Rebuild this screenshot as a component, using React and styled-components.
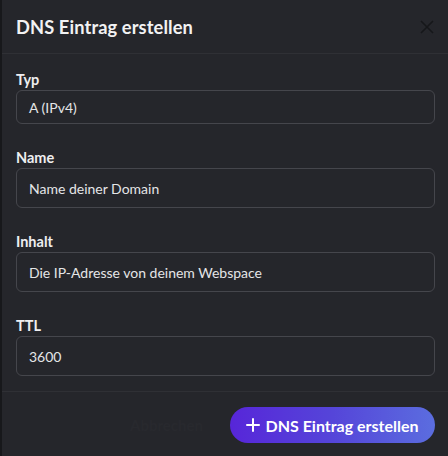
import React from "react";
import styled, { createGlobalStyle } from "styled-components";

const Global = createGlobalStyle`
  html, body { margin: 0; padding: 0; background: #141517; }
  body { font-family: Lato, "Noto Sans", sans-serif; }
  * { box-sizing: border-box; }
`;

const Screen = styled.div`
  display: flex;
  width: 448px;
  height: 456px;
  overflow: hidden;
`;

const Backdrop = styled.div`
  width: 2px;
  flex: none;
  background: #17181b;
`;

const Modal = styled.div`
  flex: 1;
  display: flex;
  flex-direction: column;
  background: #25262b;
  color: #c1c2c5;
`;

const Header = styled.div`
  height: 54px;
  display: flex;
  align-items: center;
  justify-content: space-between;
  padding: 0 13px 0 14px;
  border-bottom: 1px solid #2f3035;
`;

const Title = styled.h2`
  margin: 0;
  font-size: 18.3px;
  font-weight: 700;
  color: #f2f2f3;
  letter-spacing: 0.1px;
`;

const Close = styled.button`
  width: 16px;
  height: 16px;
  padding: 0;
  border: 0;
  background: transparent;
  display: flex;
  align-items: center;
  justify-content: center;
`;

const Body = styled.div`
  display: flex;
  flex-direction: column;
  gap: 25px;
  padding: 17px 13px 15px 14px;
  border-bottom: 1px solid #2f3035;
`;

const Field = styled.div`
  display: flex;
  flex-direction: column;
  gap: 1px;
`;

const Label = styled.label`
  font-size: 14.5px;
  line-height: 18px;
  font-weight: 700;
  color: #eeeef0;
`;

const Input = styled.div`
  height: ${(p) => p.$h}px;
  display: flex;
  align-items: center;
  padding: 0 12px;
  border: 1px solid #45464c;
  border-radius: 6px;
  font-size: 14px;
  color: #e4e5e7;
`;

const Footer = styled.div`
  flex: 1;
  display: flex;
  align-items: flex-start;
  justify-content: flex-end;
  gap: 27px;
  padding: 15px 13px 0 14px;
`;

const Ghost = styled.span`
  font-size: 15px;
  font-weight: 700;
  color: #28292e;
  line-height: 36px;
`;

const Primary = styled.button`
  height: 36px;
  width: 205px;
  border: 0;
  border-radius: 18px;
  background: linear-gradient(90deg, #5726d9 0%, #5545d9 50%, #5b6ddf 100%);
  color: #ffffff;
  font-family: inherit;
  font-size: 16px;
  font-weight: 700;
  display: flex;
  align-items: center;
  justify-content: center;
  gap: 5px;
`;

const fields = [
  { label: "Typ", value: "A (IPv4)", h: 34 },
  { label: "Name", value: "Name deiner Domain", h: 40 },
  { label: "Inhalt", value: "Die IP-Adresse von deinem Webspace", h: 40 },
  { label: "TTL", value: "3600", h: 40 },
];

export default function App() {
  return (
    <>
      <Global />
      <Screen>
        <Backdrop />
        <Modal>
          <Header>
            <Title>DNS Eintrag erstellen</Title>
            <Close aria-label="close">
              <svg width="14" height="14" viewBox="0 0 14 14">
                <path d="M1 1L13 13M13 1L1 13" stroke="#16171a" strokeWidth="1.6" />
              </svg>
            </Close>
          </Header>
          <Body>
            {fields.map((f) => (
              <Field key={f.label}>
                <Label>{f.label}</Label>
                <Input $h={f.h}>{f.value}</Input>
              </Field>
            ))}
          </Body>
          <Footer>
            <Ghost>Abbrechen</Ghost>
            <Primary>
              <svg width="14" height="14" viewBox="0 0 14 14">
                <path d="M7 1V13M1 7H13" stroke="#fff" strokeWidth="2" strokeLinecap="round" />
              </svg>
              DNS Eintrag erstellen
            </Primary>
          </Footer>
        </Modal>
      </Screen>
    </>
  );
}
